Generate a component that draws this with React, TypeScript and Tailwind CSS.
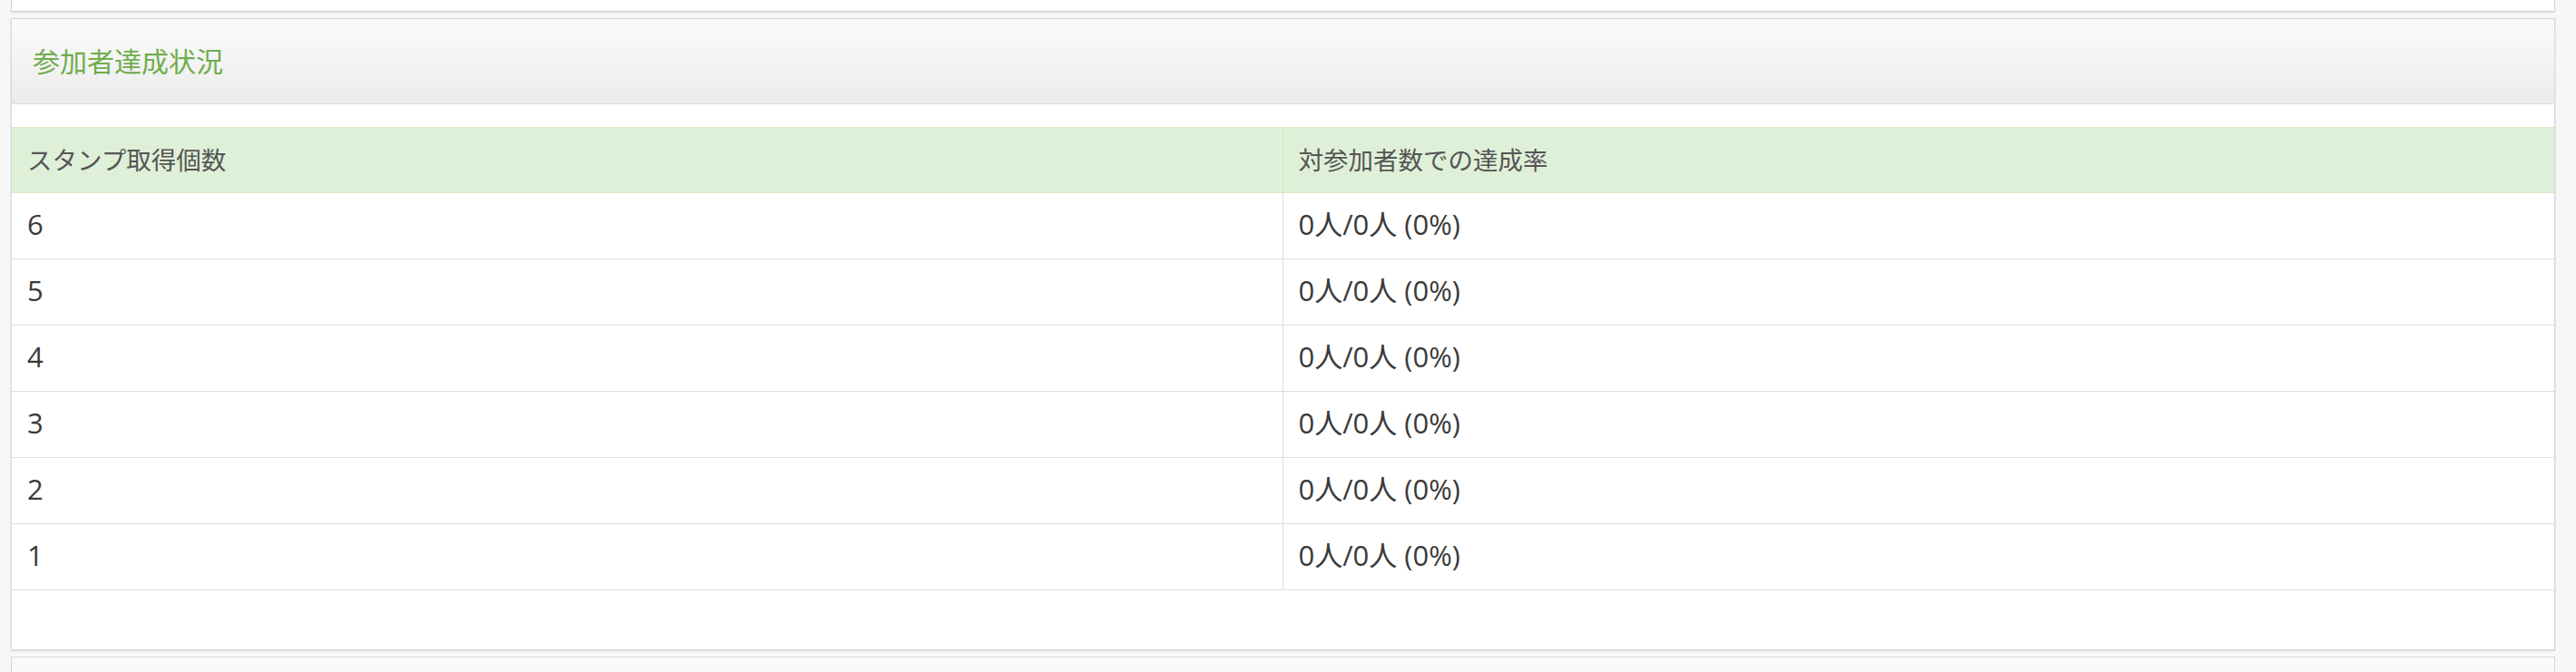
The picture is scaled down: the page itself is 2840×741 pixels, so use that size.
import React from 'react';

const rows = [6, 5, 4, 3, 2, 1];

const font = { fontFamily: '"Open Sans", "Noto Sans CJK JP", sans-serif' };

export default function App() {
  return (
    <div className="min-h-[741px] bg-[#f7f7f7] pl-[12px] pr-[23px]" style={font}>
      {/* previous panel, bottom edge only */}
      <div className="h-[13px] border-x border-b border-[#d2d2d2] bg-white shadow-[0_1px_1px_rgba(0,0,0,0.08)]" />

      <div className="mt-[7px] border border-[#d6d6d6] bg-white shadow-[0_1px_2px_rgba(0,0,0,0.12)]">
        <div className="flex h-[94px] items-center border-b border-[#dcdcdc] bg-gradient-to-b from-[#fbfbfb] to-[#ececec] px-[23px]">
          <h2 className="text-[30px] font-normal text-[#70ad4c]">参加者達成状況</h2>
        </div>

        <div className="pb-[65px] pt-[25px]">
          <div className="grid h-[73px] grid-cols-2 border-y border-[#d6e9c6] bg-[#dff0d8] text-[27.5px] text-[#555]">
            <div className="flex items-center border-r border-[#d6e9c6] px-[17px]">スタンプ取得個数</div>
            <div className="flex items-center px-[17px]">対参加者数での達成率</div>
          </div>
          {rows.map((n) => (
            <div key={n} className="grid h-[73px] grid-cols-2 border-b border-[#dddddd] text-[31px] text-[#3a3a3a]">
              <div className="flex items-center border-r border-[#dddddd] px-[17px] pb-[4px]">{n}</div>
              <div className="flex items-center px-[17px] pb-[4px]">0人/0人 (0%)</div>
            </div>
          ))}
        </div>
      </div>

      {/* next panel, top edge only */}
      <div className="mt-[7px] h-[20px] border-x border-t border-[#d6d6d6] bg-[#fafafa]" />
    </div>
  );
}
